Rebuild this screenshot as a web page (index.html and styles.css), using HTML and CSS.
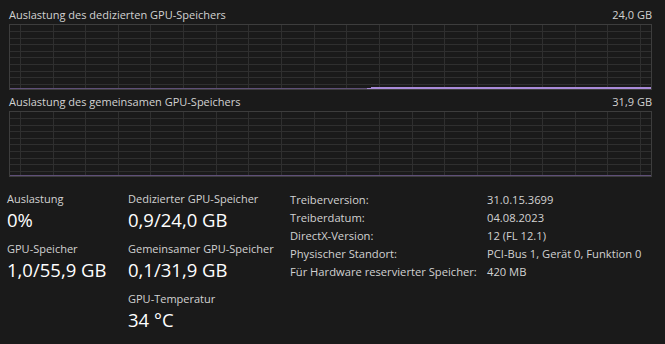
FILE: index.html
```html
<!DOCTYPE html>
<html lang="de">
<head>
    <meta charset="UTF-8">
    <title>GPU</title>
    <link rel="stylesheet" href="styles.css">
</head>
<body>
    <div class="charts">
        <div class="chart-head">
            <span>Auslastung des dedizierten GPU-Speichers</span>
            <span>24,0 GB</span>
        </div>
        <svg class="chart" width="643" height="66" viewBox="0 0 643 66" shape-rendering="crispEdges">
            <g class="grid">
                <line x1="0" y1="7.5" x2="643" y2="7.5"/><line x1="0" y1="14.5" x2="643" y2="14.5"/>
                <line x1="0" y1="20.5" x2="643" y2="20.5"/><line x1="0" y1="27.5" x2="643" y2="27.5"/>
                <line x1="0" y1="33.5" x2="643" y2="33.5"/><line x1="0" y1="40.5" x2="643" y2="40.5"/>
                <line x1="0" y1="47.5" x2="643" y2="47.5"/><line x1="0" y1="53.5" x2="643" y2="53.5"/>
                <line x1="0" y1="60.5" x2="643" y2="60.5"/>
                <line x1="11.5" y1="0" x2="11.5" y2="66"/><line x1="44.5" y1="0" x2="44.5" y2="66"/>
                <line x1="76.5" y1="0" x2="76.5" y2="66"/><line x1="109.5" y1="0" x2="109.5" y2="66"/>
                <line x1="141.5" y1="0" x2="141.5" y2="66"/><line x1="174.5" y1="0" x2="174.5" y2="66"/>
                <line x1="207.5" y1="0" x2="207.5" y2="66"/><line x1="239.5" y1="0" x2="239.5" y2="66"/>
                <line x1="272.5" y1="0" x2="272.5" y2="66"/><line x1="305.5" y1="0" x2="305.5" y2="66"/>
                <line x1="337.5" y1="0" x2="337.5" y2="66"/><line x1="370.5" y1="0" x2="370.5" y2="66"/>
                <line x1="403.5" y1="0" x2="403.5" y2="66"/><line x1="435.5" y1="0" x2="435.5" y2="66"/>
                <line x1="468.5" y1="0" x2="468.5" y2="66"/><line x1="501.5" y1="0" x2="501.5" y2="66"/>
                <line x1="533.5" y1="0" x2="533.5" y2="66"/><line x1="566.5" y1="0" x2="566.5" y2="66"/>
                <line x1="598.5" y1="0" x2="598.5" y2="66"/><line x1="631.5" y1="0" x2="631.5" y2="66"/>
            </g>
            <line class="base" x1="0" y1="64.5" x2="643" y2="64.5"/>
            <polygon class="usage" points="356,65 364,63 643,63 643,65"/>
            <rect class="frame" x="0.5" y="0.5" width="642" height="65"/>
        </svg>

        <div class="chart-head second">
            <span>Auslastung des gemeinsamen GPU-Speichers</span>
            <span>31,9 GB</span>
        </div>
        <svg class="chart" width="643" height="66" viewBox="0 0 643 66" shape-rendering="crispEdges">
            <g class="grid">
                <line x1="0" y1="7.5" x2="643" y2="7.5"/><line x1="0" y1="14.5" x2="643" y2="14.5"/>
                <line x1="0" y1="20.5" x2="643" y2="20.5"/><line x1="0" y1="27.5" x2="643" y2="27.5"/>
                <line x1="0" y1="33.5" x2="643" y2="33.5"/><line x1="0" y1="40.5" x2="643" y2="40.5"/>
                <line x1="0" y1="47.5" x2="643" y2="47.5"/><line x1="0" y1="53.5" x2="643" y2="53.5"/>
                <line x1="0" y1="60.5" x2="643" y2="60.5"/>
                <line x1="11.5" y1="0" x2="11.5" y2="66"/><line x1="44.5" y1="0" x2="44.5" y2="66"/>
                <line x1="76.5" y1="0" x2="76.5" y2="66"/><line x1="109.5" y1="0" x2="109.5" y2="66"/>
                <line x1="141.5" y1="0" x2="141.5" y2="66"/><line x1="174.5" y1="0" x2="174.5" y2="66"/>
                <line x1="207.5" y1="0" x2="207.5" y2="66"/><line x1="239.5" y1="0" x2="239.5" y2="66"/>
                <line x1="272.5" y1="0" x2="272.5" y2="66"/><line x1="305.5" y1="0" x2="305.5" y2="66"/>
                <line x1="337.5" y1="0" x2="337.5" y2="66"/><line x1="370.5" y1="0" x2="370.5" y2="66"/>
                <line x1="403.5" y1="0" x2="403.5" y2="66"/><line x1="435.5" y1="0" x2="435.5" y2="66"/>
                <line x1="468.5" y1="0" x2="468.5" y2="66"/><line x1="501.5" y1="0" x2="501.5" y2="66"/>
                <line x1="533.5" y1="0" x2="533.5" y2="66"/><line x1="566.5" y1="0" x2="566.5" y2="66"/>
                <line x1="598.5" y1="0" x2="598.5" y2="66"/><line x1="631.5" y1="0" x2="631.5" y2="66"/>
            </g>
            <line class="base" x1="0" y1="64.5" x2="643" y2="64.5"/>
            <rect class="frame" x="0.5" y="0.5" width="642" height="65"/>
        </svg>
    </div>

    <div class="stats">
        <div class="col first">
            <div class="label">Auslastung</div>
            <div class="value">0%</div>
            <div class="label">GPU-Speicher</div>
            <div class="value">1,0/55,9 GB</div>
        </div>
        <div class="col second">
            <div class="label">Dedizierter GPU-Speicher</div>
            <div class="value">0,9/24,0 GB</div>
            <div class="label">Gemeinsamer GPU-Speicher</div>
            <div class="value">0,1/31,9 GB</div>
            <div class="label">GPU-Temperatur</div>
            <div class="value">34 °C</div>
        </div>
        <div class="info">
            <span>Treiberversion:</span><span>31.0.15.3699</span>
            <span>Treiberdatum:</span><span>04.08.2023</span>
            <span>DirectX-Version:</span><span>12 (FL 12.1)</span>
            <span>Physischer Standort:</span><span>PCI-Bus 1, Gerät 0, Funktion 0</span>
            <span>Für Hardware reservierter Speicher:</span><span>420 MB</span>
        </div>
    </div>
</body>
</html>
```

FILE: styles.css
```css
body {
    margin: 0;
    background-color: #1a1a1a;
    color: #d2d2d2;
    font-family: "Open Sans", "Liberation Sans", sans-serif;
    font-size: 11px;
}
.charts {
    padding: 7px 0 0 9px;
    width: 643px;
}
.chart-head {
    display: flex;
    justify-content: space-between;
    line-height: 16px;
    height: 16px;
    margin-bottom: 1px;
}
.chart-head.second {
    margin-top: 4px;
}
.chart {
    display: block;
}
.grid line {
    stroke: #2f2f2f;
    stroke-width: 1;
}
.base {
    stroke: #5f4f78;
    stroke-width: 1;
}
.usage {
    fill: #a98bd9;
}
.frame {
    fill: none;
    stroke: #3d3d3d;
    stroke-width: 1;
}
.stats {
    display: flex;
    margin-top: 14px;
}
.col {
    display: flex;
    flex-direction: column;
}
.col.first {
    padding-left: 7px;
    width: 121px;
}
.col.second {
    width: 162px;
}
.label {
    line-height: 16px;
}
.value {
    color: #fff;
    font-size: 18.5px;
    line-height: 26px;
    margin-bottom: 8px;
}
.info {
    display: grid;
    grid-template-columns: 197px auto;
    grid-auto-rows: 18px;
    line-height: 18px;
    font-size: 11.2px;
}
```
